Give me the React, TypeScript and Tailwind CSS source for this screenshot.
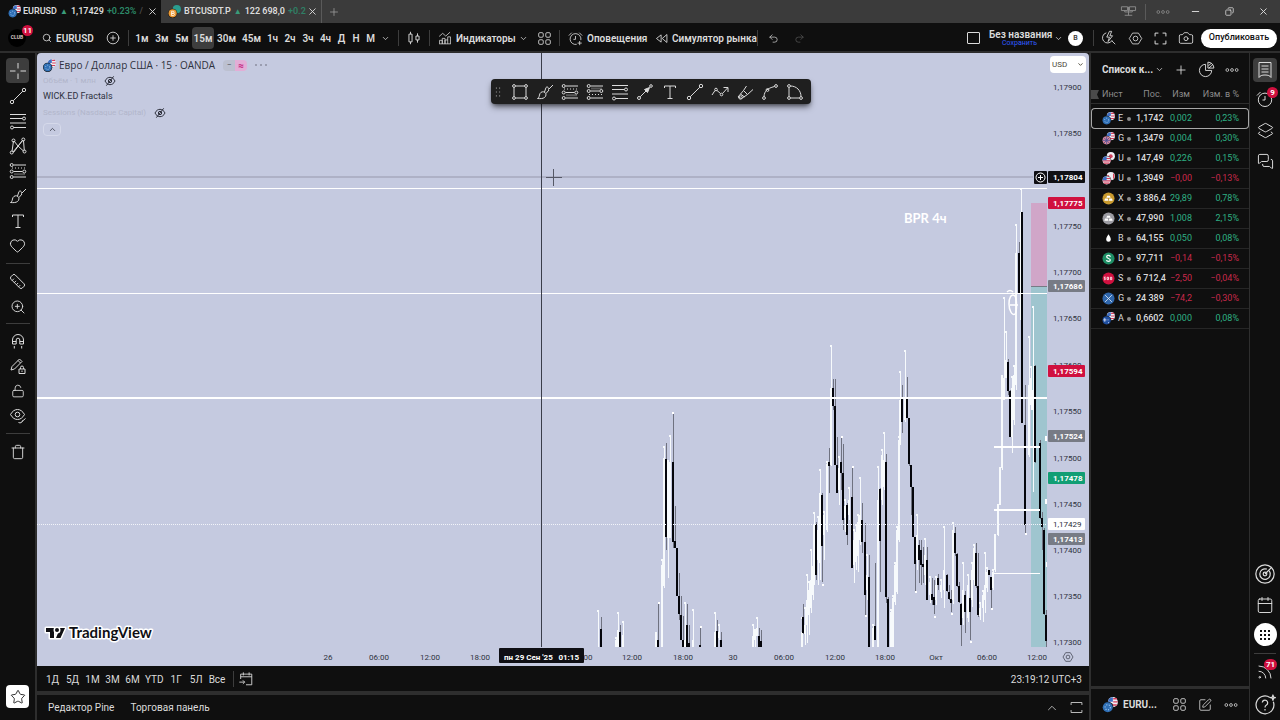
import type { ReactNode } from "react";
import {
  ChevronDown,
  ChevronUp,
  Search,
  CirclePlus,
  Heart,
  Ruler,
  ZoomIn,
  LockOpen,
  Trash,
  Star,
  Plus,
  X,
  Minus,
  Undo2,
  Redo2,
  Camera,
  Layers2,
  MessagesSquare,
  Calendar,
  SquarePen,
  Copy,
  Rss,
} from "lucide-react";

/* ---------- icons ---------- */

function Glyph({ children, size = 18, className = "" }: { children: ReactNode; size?: number; className?: string }) {
  return (
    <svg
      width={size}
      height={size}
      viewBox="0 0 18 18"
      fill="none"
      stroke="currentColor"
      strokeWidth={1}
      strokeLinejoin="round"
      className={`shrink-0 ${className}`}
      aria-hidden="true"
    >
      {children}
    </svg>
  );
}

const CrossIcon = () => (
  <Glyph>
    <path d="M9 1v5.5M9 11.500v5.500M1 9h5.500M11.500 9h5.500" />
  </Glyph>
);

const TrendIcon = () => (
  <Glyph>
    <circle cx="3" cy="15" r="1.700" />
    <circle cx="15" cy="3" r="1.700" />
    <path d="M4.200 13.800 13.800 4.200" />
  </Glyph>
);

const LevelsIcon = () => (
  <Glyph>
    <path d="M1 2.500h16M1 6.500h12.500M1 11h16" />
    <circle cx="15" cy="6.500" r="1.500" />
    <path d="M4.500 15.500H17" />
    <circle cx="3" cy="15.500" r="1.500" />
  </Glyph>
);

const PatternIcon = () => (
  <Glyph>
    <path d="M3 14.500 4.500 4M5 4l4 5 5-6M14.500 3.500l.800 10M4 15l5-6 5.500 5M4.500 15.500 13 4" />
    <circle cx="2.700" cy="15.500" r="1.500" />
    <circle cx="4.500" cy="3.500" r="1.500" />
    <circle cx="14.300" cy="2.500" r="1.500" />
    <circle cx="15.500" cy="14.500" r="1.500" />
  </Glyph>
);

const PositionIcon = () => (
  <Glyph>
    <circle cx="2.700" cy="3" r="1.500" />
    <path d="M4.500 3H17" />
    <path d="M3 6h14" strokeDasharray="1 2" />
    <circle cx="2.700" cy="9.500" r="1.500" />
    <path d="M4.500 9.500h9" />
    <circle cx="15.300" cy="9.500" r="1.500" />
    <circle cx="2.700" cy="15" r="1.500" />
    <path d="M4.500 15H17" />
    <path d="M5 12.200h11" strokeWidth="2" opacity="0.300" />
  </Glyph>
);

const ShortPositionIcon = () => (
  <Glyph>
    <circle cx="2.700" cy="3" r="1.500" />
    <path d="M4.500 3H17" />
    <path d="M5 5.500h11" strokeWidth="2" opacity="0.300" />
    <circle cx="2.700" cy="8" r="1.500" />
    <path d="M4.500 8h9" />
    <circle cx="15.300" cy="8" r="1.500" />
    <path d="M3 11.500h14" strokeDasharray="1 2" />
    <circle cx="2.700" cy="15" r="1.500" />
    <path d="M4.500 15H17" />
  </Glyph>
);

const BrushIcon = () => (
  <Glyph>
    <path d="M1.500 15.500c2-.500 1.500-3 2.500-5 1-1.800 3.300-2.300 5-1 1.500 1.300 1.300 3.500-.500 5-1.500 1.200-4.500 1.300-7 1Z" />
    <path d="m8.500 9 1.500-4.500c1.500-1.500 3 .500 2.500 2L17 2M10 10.500l3-3.500" />
  </Glyph>
);

const TextIcon = () => (
  <Glyph>
    <path d="M3.500 5V3h11v2M9 3v12.500M6.500 15.500h5" />
  </Glyph>
);

const MagnetIcon = () => (
  <Glyph>
    <path d="M3.500 12V8a5.500 5.500 0 0 1 11 0v4h-3.700V8a1.800 1.800 0 0 0-3.600 0v4H3.500ZM3.500 9.500h3.700M10.800 9.500h3.700M5.300 14v2.500M12.700 14v2.500" />
  </Glyph>
);

const PencilLockIcon = () => (
  <Glyph>
    <path d="m2 13 1-3.500 7.500-7.500 2.500 2.500L5.500 12 2 13ZM9 3.500 11.500 6" />
    <path d="M10 12h6v4.500h-6zM11.500 12v-1.500a1.500 1.500 0 0 1 3 0V12M13 13.500v1.500" />
  </Glyph>
);

const EyeIcon = () => (
  <Glyph>
    <path d="M1.500 7.500C3.500 4 5.800 2.500 8.500 2.500s5 1.500 7 5c-2 3.500-4.300 5-7 5s-5-1.500-7-5Z" />
    <circle cx="8.500" cy="7.500" r="2.300" />
    <path d="M9.500 15.500c2 .800 3.500.300 4-2M13 14.500l3.500-3" />
  </Glyph>
);

const HiddenIcon = () => (
  <Glyph size={12} className="text-[#22252f]">
    <path d="M1.500 9C3.500 5 6 3.500 9 3.500S14.500 5 16.500 9c-2 4-4.500 5.500-7.500 5.500S3.500 13 1.500 9Z" strokeWidth="1.400" />
    <circle cx="9" cy="9" r="2.500" strokeWidth="1.400" />
    <path d="M3.500 16 14.500 2" strokeWidth="1.400" />
  </Glyph>
);

const CandlesIcon = () => (
  <Glyph size={14}>
    <path d="M2.500 4h4v10h-4zM4.500 1V4M4.500 14v3M11.500 6.500h4v5h-4zM13.500 3v3.500M13.500 11.500V15" strokeWidth="1.200" />
  </Glyph>
);

const IndicatorsIcon = () => (
  <Glyph size={14}>
    <path d="M2 16.500V12h3.500v4.500M5.500 16.500V9.500H9v7M9 16.500v-5h3.500M12.500 16.500v-9H16v9M1.500 16.500h15M1.500 7 6 3l4 3.500L15.500 1.500" />
  </Glyph>
);

const SquaresIcon = ({ size = 15 }: { size?: number }) => (
  <Glyph size={size}>
    <rect x="2" y="2" width="5.500" height="5.500" rx="1.500" />
    <rect x="10.500" y="2" width="5.500" height="5.500" rx="1.500" />
    <rect x="2" y="10.500" width="5.500" height="5.500" rx="1.500" />
    <rect x="10.500" y="10.500" width="5.500" height="5.500" rx="1.500" />
  </Glyph>
);

const AlarmIcon = ({ size = 15, plus = false }: { size?: number; plus?: boolean }) => (
  <Glyph size={size}>
    <path d={plus ? "M15.400 11a6.500 6.500 0 1 0-5 5M14 12v5M11.500 14.500h5" : "M9 16.500a6.700 6.700 0 1 0 0-13.400 6.700 6.700 0 0 0 0 13.400Z"} />
    <path d="M9 6v4H6.500M1 5.500 4.500 2M17 5.500 13.500 2" />
  </Glyph>
);

const RewindIcon = () => (
  <Glyph size={13}>
    <path d="M8.500 4v10L2 9l6.500-5ZM16.500 3.500v11L10 9l6.500-5.500Z" strokeWidth="1.200" />
  </Glyph>
);

const BoltSearchIcon = () => (
  <Glyph size={16}>
    <path d="M6 3.200a5.800 5.800 0 1 0 6.500 8.500M12 12l4 4M9.500 1.500 6.500 8h3l-1.500 5 5-6.500h-3l2-5h-2.500Z" />
  </Glyph>
);

const HexIcon = ({ size = 16 }: { size?: number }) => (
  <Glyph size={size}>
    <path d="M5.500 2.500h7L16.500 9l-4 6.500h-7L1.500 9l4-6.500Z" />
    <circle cx="9" cy="9" r="2.800" />
  </Glyph>
);

const FullscreenIcon = () => (
  <Glyph size={15}>
    <path d="M2.500 6.500v-4h4M11.500 2.500h4v4M15.500 11.500v4h-4M6.500 15.500h-4v-4" strokeWidth="1.200" />
  </Glyph>
);

const DotsIcon = ({ size = 16 }: { size?: number }) => (
  <Glyph size={size}>
    <circle cx="3" cy="9" r="1.800" />
    <circle cx="9" cy="9" r="1.800" />
    <circle cx="15" cy="9" r="1.800" />
  </Glyph>
);

const PieIcon = () => (
  <Glyph size={17}>
    <path d="M8 3.500a6.500 6.500 0 1 0 6.500 6.500H8V3.500Z" />
    <path d="M10.500 1.200v6.300h6.300a6.300 6.300 0 0 0-6.300-6.300ZM11 5l3-2.500M11.500 7.500l4.500-4" />
  </Glyph>
);

const WatchlistIcon = () => (
  <Glyph>
    <path d="M3 1.500h12v15c-1-1.800-3-2.500-6-2.500s-5 .700-6 2.500v-15ZM5.500 5h7M5.500 8h7M5.500 11h7" />
  </Glyph>
);

const RadarIcon = () => (
  <Glyph size={22}>
    <circle cx="9" cy="9" r="7.500" />
    <path d="M12.500 6.500a4.300 4.300 0 1 1-2-1.500M9 9l5-5" />
    <circle cx="9" cy="9" r="1.500" />
  </Glyph>
);

const HelpIcon = () => (
  <Glyph size={22}>
    <path d="M13 2.800a7.300 7.300 0 1 0 2.800 3.500M15.500.800l.500 1.700 1.500.500-1.500.500-.500 1.700-.500-1.700-1.500-.500 1.500-.500.500-1.700Z" />
    <path d="M6.800 7a2.200 2.200 0 1 1 3.400 2c-.900.500-1.200.900-1.200 2M9 12.200v1.300" />
  </Glyph>
);

const DateGoIcon = () => (
  <Glyph size={16}>
    <path d="M3 9V3.500h12.500v12H9M3 6.500h12.500M6 1.500v3.500M12.500 1.500v3.500M1.500 12.500h6M5.500 10.500l2 2-2 2" />
  </Glyph>
);

const RectIcon = () => (
  <Glyph>
    <path d="M4.500 3h9M4.500 15h9M3 4.500v9M15 4.500v9" />
    <circle cx="3" cy="3" r="1.400" />
    <circle cx="15" cy="3" r="1.400" />
    <circle cx="3" cy="15" r="1.400" />
    <circle cx="15" cy="15" r="1.400" />
  </Glyph>
);

const ArrowIcon = () => (
  <Glyph>
    <circle cx="3" cy="15" r="1.500" />
    <circle cx="15" cy="3" r="1.300" />
    <path d="M4.200 13.800 13 5" />
    <path d="m13.500 4.500-5 2 3 3 2-5Z" fill="currentColor" />
  </Glyph>
);

const ZigzagIcon = () => (
  <Glyph>
    <path d="M1 12l3-4.500M6 7.500l3.500 3M11.500 10.500 16.500 5M12.500 4.500H17V9" />
    <circle cx="5" cy="6.500" r="1.300" />
    <circle cx="10.500" cy="11.500" r="1.300" />
  </Glyph>
);

const HighlighterIcon = () => (
  <Glyph>
    <path d="m2 14 5.500-6.500 4 4L5.500 15.500 2 14ZM7.500 7.500l3-4.500M11.500 11.500l5.500-5M4.500 11l4 3" />
    <circle cx="4.500" cy="14.500" r="1.700" />
  </Glyph>
);

const CurveIcon = () => (
  <Glyph>
    <path d="M3 13.500C3.500 8 6 5.500 13.500 3.500" />
    <circle cx="3" cy="15" r="1.400" />
    <circle cx="6.500" cy="7" r="1.400" />
    <circle cx="15" cy="3" r="1.400" />
  </Glyph>
);

const SectorIcon = () => (
  <Glyph>
    <path d="M3 4.500v9M4.500 3c6 0 10.500 4.500 10.500 10.500M4.500 15h9" />
    <circle cx="3" cy="3" r="1.400" />
    <circle cx="3" cy="15" r="1.400" />
    <circle cx="15" cy="15" r="1.400" />
  </Glyph>
);

function PairIcon({ front, back, size = 13 }: { front: "eu" | "gb" | "us" | "au" | "btc"; back: "us" | "jp" | "ca" | "usdt"; size?: number }) {
  const fill = { eu: "#2f6fb5", gb: "#d9879b", us: "#e8e4ee", au: "#1f4fa0", btc: "#eb9a35" }[front];
  return (
    <svg width={size} height={size} viewBox="0 0 14 14" className="shrink-0" aria-hidden="true">
      <circle cx="9.500" cy="4.500" r="4.400" fill={back === "usdt" ? "#2a9d8f" : "#f0eef4"} />
      {back === "us" && <path d="M9.500.200a4.400 4.400 0 0 0-4.300 4h4.300Z" fill="#3f6fc4" />}
      {back === "us" && <path d="M9.800 1.500h3.200M9.800 4.300h4M8 7h5" stroke="#d3405c" strokeWidth="1.200" />}
      {back === "jp" && <circle cx="9.500" cy="4.500" r="2" fill="#d3405c" />}
      {back === "ca" && <path d="M5.500 3.500h2v3h-2zM12 1.200v6.500a4.400 4.400 0 0 0 0-6.500Z" fill="#d92b45" />}
      <circle cx="5" cy="9" r="5" fill="#0f0f0f" />
      <circle cx="5" cy="9" r="4.400" fill={fill} />
      {front === "eu" && <circle cx="5" cy="9" r="2.300" fill="none" stroke="#a9cdf0" strokeWidth="0.900" strokeDasharray="1 1.300" />}
      {front === "gb" && <path d="M5 4.800v8.400M.800 9h8.400M2 6l6 6M8 6l-6 6" stroke="#4a4f96" strokeWidth="0.900" />}
      {front === "us" && <path d="M1.500 7h7.500M1 9.500h8.400M2 12h6" stroke="#d3405c" strokeWidth="1.200" />}
      {front === "us" && <path d="M5 4.600A4.400 4.400 0 0 0 .700 9H5Z" fill="#3f6fc4" />}
      {front === "au" && <path d="M3 6.500v4M1.300 8.500h3.500M6.500 8v1M7 11v1" stroke="#e0e6f5" strokeWidth="0.900" />}
      {front === "btc" && <path d="M3.800 6.800h1.700a1 1 0 0 1 0 2.200H3.800Zm0 2.200h2a1 1 0 0 1 0 2.300h-2Z" fill="none" stroke="#fff" strokeWidth="0.800" />}
    </svg>
  );
}

function RoundIcon({ kind }: { kind: "gold" | "silver" | "oil" | "dxy" | "spx" | "xrp" }) {
  const fill = { gold: "#c99a2e", silver: "#9c9ca3", oil: "#0f0f0f", dxy: "#1f8f66", spx: "#d0103f", xrp: "#2f66ab" }[kind];
  return (
    <svg width="13" height="13" viewBox="0 0 14 14" className="shrink-0" aria-hidden="true">
      <circle cx="7" cy="7" r="6.500" fill={fill} />
      {(kind === "gold" || kind === "silver") && <path d="M5.500 4h3l.800 2.200H4.700zM3.200 7h3l.800 2.500H2.500zM7.800 7h3l.700 2.500H7.500z" fill="#fff" />}
      {kind === "oil" && <path d="M7 2.500c1.500 2.300 2.500 4 2.500 5.500a2.500 2.500 0 0 1-5 0c0-1.500 1-3.200 2.500-5.500Z" fill="#fff" />}
      {kind === "dxy" && <path d="M9 5.200c-.300-2-4-1.900-4 0 0 2 4 1.500 4 3.500 0 1.900-3.900 1.900-4.200 0" fill="none" stroke="#fff" strokeWidth="1.300" />}
      {kind === "spx" && <path d="M4 5.500H2.500v1.300h1v1.500h-1.200M5.500 5.700h1.500v2.500H5.500zM9 5.700h1.500v2.500H9z" fill="none" stroke="#fff" strokeWidth="0.900" />}
      {kind === "xrp" && <path d="M3.500 3.500C5 5 6.500 6.500 7 7c.500-.500 2-2 3.500-3.500M3.500 10.500C5 9 6.500 7.500 7 7c.500.500 2 2 3.500 3.500" fill="none" stroke="#fff" strokeWidth="0.900" />}
    </svg>
  );
}

/* ---------- chart data ---------- */

type Bar = [x: number, high: number, low: number, top: number, bottom: number];

const upBars: Bar[] = [
  [598, 611, 647, 647, 647], [616, 638, 647, 640, 647], [618, 613, 647, 630, 647], [623, 622, 647, 635, 647],
  [656, 633, 647, 633, 647], [662, 560, 647, 565, 647], [664, 447, 588, 458, 586], [668, 510, 578, 460, 538],
  [670, 436, 538, 462, 538], [685, 603, 647, 640, 647], [693, 610, 647, 640, 647], [715, 613, 647, 632, 647],
  [719, 625, 640, 632, 638], [753, 625, 647, 636, 647], [755, 630, 647, 630, 640], [757, 618, 636, 628, 636],
  [802, 618, 647, 632, 647], [805, 608, 645, 625, 634], [807, 575, 643, 600, 625], [809, 582, 635, 590, 615],
  [811, 550, 613, 580, 608], [813, 567, 600, 567, 595], [814, 513, 585, 525, 568], [818, 517, 585, 530, 560],
  [820, 470, 580, 493, 563], [824, 512, 560, 515, 535], [827, 462, 532, 464, 530], [831, 346, 466, 388, 465],
  [839, 457, 505, 468, 490], [845, 500, 532, 506, 518], [849, 488, 520, 500, 515], [854, 530, 583, 540, 565],
  [856, 525, 570, 532, 562], [858, 515, 572, 522, 556], [860, 478, 545, 515, 540], [867, 555, 600, 575, 590],
  [873, 625, 647, 628, 647], [878, 467, 647, 500, 647], [882, 450, 505, 455, 500], [884, 433, 490, 460, 487],
  [891, 610, 647, 612, 647], [893, 596, 647, 598, 647], [895, 563, 605, 565, 602], [897, 527, 594, 530, 592],
  [899, 437, 542, 440, 540], [900, 372, 445, 400, 440], [905, 351, 422, 398, 420], [917, 515, 570, 535, 560],
  [925, 539, 585, 555, 575], [930, 577, 603, 582, 595], [936, 577, 605, 585, 600], [941, 580, 598, 585, 592],
  [944, 527, 608, 570, 590], [953, 523, 604, 530, 600], [963, 563, 625, 590, 618], [968, 575, 622, 585, 618],
  [972, 563, 607, 570, 600], [974, 545, 585, 548, 580], [980, 603, 620, 608, 616], [983, 591, 622, 595, 608],
  [985, 553, 613, 585, 600], [987, 568, 592, 572, 588], [993, 570, 590, 572, 588], [995, 535, 572, 536, 570],
  [998, 505, 536, 505, 535], [1000, 468, 505, 468, 505], [1002, 376, 470, 377, 468], [1004, 298, 392, 378, 400],
  [1006, 332, 378, 360, 378], [1012, 377, 453, 388, 437], [1014, 366, 425, 375, 420], [1016, 225, 390, 253, 385],
  [1021, 189, 330, 212, 320], [1029, 337, 457, 385, 455], [1031, 367, 410, 378, 405], [1033, 307, 492, 390, 410],
];

const downBars: Bar[] = [
  [601, 617, 647, 629, 647], [620, 625, 647, 632, 647], [658, 603, 647, 640, 647], [666, 443, 550, 459, 537],
  [673, 413, 548, 462, 542], [675, 506, 548, 541, 548], [677, 548, 596, 548, 596], [679, 573, 620, 596, 614],
  [681, 596, 640, 615, 640], [683, 616, 647, 640, 647], [687, 604, 647, 625, 647], [689, 625, 647, 643, 647],
  [700, 628, 647, 645, 647], [717, 620, 647, 631, 647], [721, 632, 647, 640, 647], [759, 628, 647, 636, 647],
  [761, 630, 647, 641, 647], [803, 604, 634, 617, 633], [816, 522, 580, 524, 575], [822, 493, 582, 495, 546],
  [829, 448, 493, 462, 466], [833, 379, 410, 388, 406], [835, 379, 465, 406, 465], [837, 437, 493, 465, 493],
  [841, 438, 490, 462, 473], [843, 444, 530, 473, 520], [847, 503, 545, 505, 535], [852, 468, 568, 497, 568],
  [862, 503, 553, 520, 542], [865, 523, 615, 542, 595], [869, 555, 647, 577, 647], [875, 563, 640, 626, 640],
  [880, 488, 592, 489, 541], [886, 454, 603, 462, 597], [888, 597, 647, 599, 647], [902, 385, 433, 398, 422],
  [907, 377, 418, 398, 418], [909, 418, 466, 418, 464], [911, 465, 515, 465, 487], [913, 487, 537, 487, 537],
  [915, 537, 591, 537, 564], [919, 540, 583, 545, 560], [921, 540, 585, 550, 565], [923, 547, 583, 564, 567],
  [927, 547, 600, 560, 600], [932, 578, 605, 594, 600], [934, 580, 614, 597, 605], [938, 574, 590, 578, 585],
  [947, 574, 592, 575, 591], [949, 585, 600, 592, 599], [951, 590, 612, 599, 603], [955, 527, 556, 533, 553],
  [957, 553, 587, 554, 586], [959, 582, 603, 586, 602], [961, 603, 646, 604, 625], [965, 591, 633, 595, 612],
  [970, 580, 640, 598, 612], [976, 543, 588, 553, 586], [978, 553, 617, 586, 615], [989, 570, 575, 570, 575],
  [991, 577, 608, 577, 590], [1008, 359, 395, 362, 391], [1010, 390, 437, 391, 437], [1019, 242, 293, 253, 293],
  [1022, 212, 423, 212, 423], [1025, 385, 533, 425, 525], [1035, 365, 463, 366, 462], [1040, 440, 519, 443, 518],
  [1042, 512, 550, 518, 527], [1044, 528, 615, 530, 614], [1046, 610, 647, 615, 641],
];

const priceTicks = [
  ["1,17900", 87], ["1,17850", 133], ["1,17750", 226], ["1,17700", 272], ["1,17650", 318], ["1,17600", 365],
  ["1,17550", 411], ["1,17500", 458], ["1,17450", 504], ["1,17400", 550], ["1,17350", 596], ["1,17300", 642],
] as const;

const priceTags = [
  { label: "1,17804", y: 177, bg: "#0f0f14", fg: "#ffffff" },
  { label: "1,17775", y: 203, bg: "#d0103f", fg: "#ffffff" },
  { label: "1,17686", y: 286, bg: "#777b85", fg: "#ffffff" },
  { label: "1,17594", y: 371, bg: "#d0103f", fg: "#ffffff" },
  { label: "1,17524", y: 436, bg: "#777b85", fg: "#ffffff" },
  { label: "1,17478", y: 478, bg: "#119e74", fg: "#ffffff" },
  { label: "1,17413", y: 539, bg: "#777b85", fg: "#ffffff" },
  { label: "1,17429", y: 524, bg: "#ffffff", fg: "#2c2f3a" },
];

const timeTicks = [
  ["26", 328], ["06:00", 379], ["12:00", 430], ["18:00", 480], ["00", 588], ["12:00", 632], ["18:00", 683],
  ["30", 733], ["06:00", 784], ["12:00", 835], ["18:00", 885], ["Окт", 936], ["06:00", 987], ["12:00", 1037],
] as const;

function Chart() {
  return (
    <svg viewBox="37 53 1052 613" preserveAspectRatio="xMaxYMin slice" className="block h-full w-full" role="img" aria-label="EURUSD, 15">
      <rect x="37" y="53" width="1052" height="613" fill="#c5cae0" />
      <g shapeRendering="crispEdges">
        <rect x="1031" y="203" width="16" height="83" fill="#d0a6c8" />
        <rect x="1031" y="287" width="16" height="360" fill="#9fc5cf" />
        <rect x="1031" y="286" width="16" height="1" fill="#777b85" />
        <rect x="37" y="176" width="996" height="2" fill="#aeb1c6" />
        {upBars.map(([x, high, low, top, bottom], i) => (
          <g key={i} fill="#f7fafc">
            <rect x={x} y={high} width="1" height={low - high} />
            <rect x={x - 1} y={high - 1} width="2" height="2" />
            <rect x={x - 1} y={top} width="2" height={bottom - top} />
          </g>
        ))}
        {downBars.map(([x, high, low, top, bottom], i) => (
          <g key={i}>
            <rect x={x} y={high} width="1" height={low - high} fill="#6f7280" />
            <rect x={x - 1} y={top} width="2" height={bottom - top} fill="#05060c" />
          </g>
        ))}
        <g fill="#ffffff">
          {[
            [672, 412], [700, 626], [852, 466], [841, 436], [865, 615], [970, 641], [951, 613], [934, 616],
            [991, 608], [1025, 533], [822, 584], [915, 591], [658, 602],
          ].map(([x, y]) => (
            <rect key={x} x={x} y={y} width="2" height="2" />
          ))}
          <rect x="37" y="188" width="1010" height="1" />
          <rect x="37" y="293" width="1010" height="1" />
          <rect x="37" y="397" width="1010" height="2" />
          <rect x="994" y="446" width="46" height="2" />
          <rect x="994" y="509" width="46" height="2" />
          <rect x="994" y="573" width="46" height="1" />
          <rect x="1045" y="436" width="2" height="5" />
          <rect x="1045" y="499" width="2" height="5" />
          <rect x="1046" y="562" width="1" height="5" />
        </g>
        <path d="M37 524.500h1010" stroke="#f2f4fa" strokeDasharray="1 1" />
        <rect x="541" y="53" width="1" height="594" fill="#3a3d4a" />
        <path d="M546 177.500h16M553.500 169v17" stroke="#555866" />
      </g>
      <path d="M1007 292c2-2 4-2 6 0M1015 296c-4-3-6 2-6 8s3 12 6 10c2-2 2-15 0-18ZM1010 305h8" fill="none" stroke="#ffffff" strokeWidth="1.500" />
      <text x="904" y="223" fontFamily="Lato, sans-serif" fontSize="13" fontWeight="700" fill="#ffffff">BPR 4ч</text>

      <g fontSize="8" fill="#2f323e">
        {priceTicks.map(([label, y]) => (
          <text key={label} x="1053" y={y + 3}>{label}</text>
        ))}
        {timeTicks.map(([label, x]) => (
          <text key={x} x={x} y="660" textAnchor="middle">{label}</text>
        ))}
      </g>
      {priceTags.map((tag) => (
        <g key={tag.label}>
          <rect x="1048" y={tag.y - 6} width="37" height="12" rx="1" fill={tag.bg} />
          <text x="1053" y={tag.y + 3} fontSize="8" fontWeight={tag.fg === "#ffffff" ? 700 : 400} fill={tag.fg}>{tag.label}</text>
        </g>
      ))}
      <rect x="1034" y="171" width="13" height="13" rx="1" fill="#0f0f14" />
      <circle cx="1040.500" cy="177.500" r="4.500" fill="none" stroke="#fff" />
      <path d="M1038 177.500h5M1040.500 175v5" stroke="#fff" />

      <rect x="499" y="648" width="85" height="15" rx="1" fill="#0f0f14" />
      <text x="504" y="660" fontSize="8" fontWeight="700" fill="#fff">пн 29 Сен '25</text>
      <text x="579" y="660" fontSize="8" fontWeight="700" fill="#fff" textAnchor="end">01:15</text>

      <g fill="#0f0f14" stroke="#ffffff" strokeWidth="3" strokeLinejoin="round" paintOrder="stroke">
        <path d="M46 628h8v10h-4v-6h-4ZM60 628h5l-4.500 10H56Z" />
        <circle cx="57" cy="630" r="2" />
        <text x="69" y="638" fontFamily="Lato, sans-serif" fontSize="15" fontWeight="700">TradingView</text>
      </g>
    </svg>
  );
}

/* ---------- window tabs ---------- */

function IconButton({ label, children, className = "" }: { label: string; children: ReactNode; className?: string }) {
  return (
    <button type="button" aria-label={label} className={`flex shrink-0 items-center justify-center ${className}`}>
      {children}
    </button>
  );
}

function WindowBar() {
  return (
    <header className="flex h-[23px] shrink-0 items-center bg-[#3b3b3b] text-[9px] font-semibold whitespace-nowrap">
      <div className="flex h-full w-[161px] shrink-0 items-center bg-[#0f0f0f] pl-2">
        <PairIcon front="eu" back="us" />
        <span className="ml-0.5">EURUSD</span>
        <span className="ml-[3px] text-[8px] text-[#3a9c7a]">▲</span>
        <span className="ml-[3px]">1,17429</span>
        <span className="ml-[3px] text-[#2c8a69]">+0.23%</span>
        <span className="ml-[3px] text-[#4a4a4a]">/</span>
        <IconButton label="Закрыть вкладку EURUSD" className="ml-auto mr-0.5 w-3.5">
          <X size={11} strokeWidth={2} />
        </IconButton>
      </div>
      <div className="flex h-full w-[161px] shrink-0 items-center border-r border-[#5a5a5a] pl-[7px]">
        <PairIcon front="btc" back="usdt" />
        <span className="ml-[3px]">BTCUSDT.P</span>
        <span className="ml-[3px] text-[8px] text-[#3a9c7a]">▲</span>
        <span className="ml-[3px]">122 698,0</span>
        <span className="ml-[3px] text-[#2f7f65]">+0.2</span>
        <IconButton label="Закрыть вкладку BTCUSDT.P" className="ml-auto mr-0.5 w-3.5">
          <X size={11} strokeWidth={2} />
        </IconButton>
      </div>
      <IconButton label="Новая вкладка" className="ml-1 w-4 text-[#a0a0a0]">
        <Plus size={12} strokeWidth={1.500} />
      </IconButton>
      <div className="ml-auto flex h-full items-center text-[#8c8c8c]">
        <IconButton label="Связать вкладки" className="w-[34px]">
          <Glyph size={17}>
            <path d="M1.500 4h6.500v4H1.500zM10 4h6.500v4H10zM9 4v9M5 13h8M5 8v1.500h8V8" />
          </Glyph>
        </IconButton>
        <span className="h-4 w-px bg-[#5a5a5a]" />
        <IconButton label="Меню" className="w-[33px]"><DotsIcon size={14} /></IconButton>
        <IconButton label="Свернуть" className="w-[33px] text-[#e0e0e0]"><Minus size={11} /></IconButton>
        <IconButton label="Развернуть" className="w-[34px] text-[#e0e0e0]"><Copy size={9} className="-scale-x-100" /></IconButton>
        <IconButton label="Закрыть окно" className="w-[34px] text-[#e0e0e0]"><X size={11} /></IconButton>
      </div>
    </header>
  );
}

/* ---------- top toolbar ---------- */

const intervals = [
  ["1м", "w-5"], ["3м", "w-5"], ["5м", "w-5"], ["15м", "w-[22px] rounded bg-[#3d3d3d]"], ["30м", "w-[25px]"], ["45м", "w-[25px]"],
  ["1ч", "w-[17px]"], ["2ч", "w-[18px]"], ["3ч", "w-[18px]"], ["4ч", "w-[17px]"], ["Д", "w-[15px]"], ["Н", "w-[14px]"], ["М", "w-[15px]"],
] as const;

const Divider = () => <span className="h-4 w-px shrink-0 bg-[#3d3d3d]" />;

function TopToolbar() {
  return (
    <div className="flex h-[30px] shrink-0 items-center border-b-2 border-[#2e2e2e] pt-0.5 text-[10px] font-semibold whitespace-nowrap">
      <button type="button" aria-label="Профиль" className="relative ml-2 flex h-[18px] w-[18px] shrink-0 items-center justify-center rounded-full bg-black text-[5px] text-[#e0d8d8]">
        CLUB
        <span className="absolute -top-1 left-[14px] flex h-[11px] w-[11px] items-center justify-center rounded-full bg-[#d0103f] text-[8px] text-white">11</span>
      </button>
      <button type="button" className="ml-4 flex w-[57px] shrink-0 items-center gap-1">
        <Search size={10} strokeWidth={2} />EURUSD
      </button>
      <IconButton label="Сравнить" className="w-[28px]"><CirclePlus size={14} strokeWidth={1.500} /></IconButton>
      <span className="w-px" />
      <Divider />
      <div className="ml-[3px] flex h-[22px] items-center">
        {intervals.map(([label, cls]) => (
          <button key={label} type="button" className={`h-full shrink-0 text-center ${cls}`}>{label}</button>
        ))}
        <IconButton label="Интервалы" className="w-[14px]"><ChevronDown size={9} /></IconButton>
      </div>
      <span className="w-1.5" />
      <Divider />
      <IconButton label="Свечи" className="w-[30px]"><CandlesIcon /></IconButton>
      <Divider />
      <button type="button" className="ml-2 flex w-[73px] shrink-0 items-center gap-1"><IndicatorsIcon />Индикаторы</button>
      <IconButton label="Избранные индикаторы" className="ml-1 w-4"><ChevronDown size={9} /></IconButton>
      <IconButton label="Шаблоны" className="ml-1 w-[18px]"><SquaresIcon size={15} /></IconButton>
      <span className="w-1.5" />
      <Divider />
      <button type="button" className="ml-2 flex w-[79px] shrink-0 items-center gap-1"><AlarmIcon plus />Оповещения</button>
      <button type="button" className="ml-2 flex w-[98px] shrink-0 items-center gap-1"><RewindIcon />Симулятор рынка</button>
      <span className="w-1" />
      <Divider />
      <IconButton label="Отменить" className="w-[31px]"><Undo2 size={11} strokeWidth={1.500} /></IconButton>
      <IconButton label="Повторить" className="w-5 text-[#5a5a5a]"><Redo2 size={11} strokeWidth={1.500} /></IconButton>

      <div className="ml-auto flex h-full items-center">
        <IconButton label="Макет" className="w-4"><span className="h-[12px] w-[13px] rounded-[1px] border border-current" /></IconButton>
        <button type="button" className="ml-2 w-[61px] text-center leading-[9px]">
          Без названия
          <span className="block text-[7px] leading-[8px] font-normal text-[#2f5bff]">Сохранить</span>
        </button>
        <IconButton label="Макеты" className="w-4"><ChevronDown size={9} /></IconButton>
        <button type="button" aria-label="Брокер" className="ml-0.5 flex h-[15px] w-[15px] items-center justify-center rounded-full bg-white text-[7px] text-[#333]">B</button>
        <span className="w-2.5" />
        <Divider />
        <IconButton label="Быстрый поиск" className="ml-0.5 w-[26px]"><BoltSearchIcon /></IconButton>
        <IconButton label="Настройки" className="w-[26px]"><HexIcon size={15} /></IconButton>
        <IconButton label="Полный экран" className="w-[25px]"><FullscreenIcon /></IconButton>
        <IconButton label="Снимок" className="w-[25px]"><Camera size={16} strokeWidth={1.300} /></IconButton>
        <button type="button" className="mx-[3px] h-[19px] w-[76px] rounded-full bg-white text-[9px] font-medium text-[#0f0f0f]">Опубликовать</button>
      </div>
    </div>
  );
}

/* ---------- left rail ---------- */

const railGroups: [string, ReactNode][][] = [
  [
    ["Перекрестие", <CrossIcon />], ["Линия тренда", <TrendIcon />], ["Фибоначчи", <LevelsIcon />], ["Паттерны", <PatternIcon />],
    ["Прогнозирование", <PositionIcon />], ["Кисть", <BrushIcon />], ["Текст", <TextIcon />], ["Иконки", <Heart size={17} strokeWidth={1.400} />],
  ],
  [["Линейка", <Ruler size={17} strokeWidth={1.400} className="-scale-100" />], ["Увеличить", <ZoomIn size={16} strokeWidth={1.400} />]],
  [["Магнит", <MagnetIcon />], ["Режим рисования", <PencilLockIcon />], ["Заблокировать", <LockOpen size={14} strokeWidth={1.500} />], ["Скрыть", <EyeIcon />]],
  [["Удалить", <Trash size={16} strokeWidth={1.400} />]],
];

function LeftRail() {
  return (
    <aside className="flex w-[37px] shrink-0 flex-col items-center border-r-2 border-[#2e2e2e] pt-[5px]">
      {railGroups.map((group, g) => (
        <div key={g} className="flex flex-col items-center">
          {g > 0 && <span className={`h-px w-6 bg-[#3d3d3d] ${g === 2 ? "my-1" : "my-[5px]"}`} />}
          {group.map(([label, icon]) => (
            <IconButton key={label} label={label} className={`h-[25px] w-[23px] rounded ${label === "Перекрестие" ? "bg-[#3d3d3d]" : ""}`}>
              {icon}
            </IconButton>
          ))}
        </div>
      ))}
      <IconButton label="Избранное" className="mt-auto mb-3 h-[23px] w-[23px] rounded bg-white text-[#222]">
        <Star size={16} strokeWidth={1.400} />
      </IconButton>
    </aside>
  );
}

/* ---------- chart pane ---------- */

const drawTools: [string, ReactNode][] = [
  ["Прямоугольник", <RectIcon />], ["Кисть", <BrushIcon />], ["Длинная позиция", <PositionIcon />], ["Короткая позиция", <ShortPositionIcon />],
  ["Коррекция", <LevelsIcon />], ["Стрелка", <ArrowIcon />], ["Текст", <TextIcon />], ["Линия", <TrendIcon />],
  ["Путь", <ZigzagIcon />], ["Маркер", <HighlighterIcon />], ["Кривая", <CurveIcon />], ["Сектор", <SectorIcon />],
];

function ChartPane() {
  return (
    <section className="relative min-h-0 flex-1 overflow-hidden rounded-t">
      <Chart />
      <div className="absolute top-1 left-1.5 flex flex-col items-start text-[9px] whitespace-nowrap text-[#2f323e]">
        <div className="flex h-4 items-center">
          <PairIcon front="eu" back="us" />
          <span className="ml-[3px] font-['Open_Sans'] text-[10px]">Евро / Доллар США · 15 · OANDA</span>
          <span className="ml-2 flex h-[11px] w-3 items-center justify-center rounded-l bg-[#bcc0d0] text-[8px] font-bold text-[#70737f]">−</span>
          <span className="flex h-[11px] w-3 items-center justify-center rounded-r bg-[#e3add6] text-[10px] font-bold text-[#c2187a]">≈</span>
          <span className="ml-2 flex gap-[3px]">
            <span className="h-0.5 w-0.5 rounded-full bg-[#8b8ea0]" />
            <span className="h-0.5 w-0.5 rounded-full bg-[#8b8ea0]" />
            <span className="h-0.5 w-0.5 rounded-full bg-[#8b8ea0]" />
          </span>
        </div>
        <div className="flex h-4 items-center gap-2 text-[8px] text-[#b2b6cb]">
          Объём · 1 млн <HiddenIcon />
        </div>
        <div className="flex h-4 items-center">WICK.ED Fractals</div>
        <div className="flex h-4 items-center gap-2 text-[8px] text-[#b2b6cb]">
          Sessions (Nasdaque Capital) <HiddenIcon />
        </div>
        <IconButton label="Свернуть легенду" className="mt-0.5 h-[13px] w-[18px] rounded-sm border border-[#d5d9ea]">
          <ChevronUp size={9} />
        </IconButton>
      </div>

      <div className="absolute top-[26px] left-[454px] flex h-[25px] items-center rounded bg-[#1f1f1f] pr-1 text-[#dbdbdb] shadow-md shadow-black/50">
        <Glyph size={14} className="text-[#6a6a6a]">
          <path d="M7 3v2M11 3v2M7 8v2M11 8v2M7 13v2M11 13v2" strokeWidth="1.500" />
        </Glyph>
        <div className="ml-0.5 flex">
          {drawTools.map(([label, icon]) => (
            <IconButton key={label} label={label} className="h-[25px] w-[25px]">{icon}</IconButton>
          ))}
        </div>
      </div>

      <label className="absolute top-[3px] right-[3px] flex h-[17px] w-9 items-center rounded-sm bg-white text-[8px] text-[#4a4636]">
        <select aria-label="Валюта" className="w-full appearance-none pl-0.5 outline-none">
          <option>USD</option>
        </select>
        <ChevronDown size={7} strokeWidth={3} className="pointer-events-none absolute right-0.5" />
      </label>
      <button type="button" aria-label="Настройки шкалы" className="absolute right-[15px] bottom-[3px] text-[#2f323e]">
        <HexIcon size={12} />
      </button>
    </section>
  );
}

const ranges = ["1Д", "5Д", "1М", "3М", "6М", "YTD", "1Г", "5Л", "Все"];

function BottomBars() {
  return (
    <>
      <div className="flex h-[25px] shrink-0 items-center px-[7px] pt-px text-[10px]">
        {ranges.map((r) => (
          <button key={r} type="button" className="mr-[3px] min-w-[17px] px-px text-center">{r}</button>
        ))}
        <span className="mr-0.5 ml-1 flex"><Divider /></span>
        <IconButton label="Перейти к дате" className="w-5"><DateGoIcon /></IconButton>
        <button type="button" className="ml-auto">23:19:12 UTC+3</button>
      </div>
      <div className="flex h-[29px] shrink-0 items-center border-t-4 border-[#2e2e2e] pr-px pl-[11px] text-[10px]">
        <button type="button">Редактор Pine</button>
        <button type="button" className="ml-4">Торговая панель</button>
        <IconButton label="Открыть панель" className="ml-auto w-6"><ChevronUp size={14} strokeWidth={1.300} /></IconButton>
        <IconButton label="Развернуть панель" className="w-6">
          <Glyph size={15}><path d="M2.500 6V3h13v3M2.500 12v3h13v-3" /></Glyph>
        </IconButton>
      </div>
    </>
  );
}

/* ---------- watchlist ---------- */

const quotes: { icon: ReactNode; sym: string; last: string; chg: string; pct: string }[] = [
  { icon: <PairIcon front="eu" back="us" />, sym: "E", last: "1,1742", chg: "0,002", pct: "0,23%" },
  { icon: <PairIcon front="gb" back="us" />, sym: "G", last: "1,3479", chg: "0,004", pct: "0,30%" },
  { icon: <PairIcon front="us" back="jp" />, sym: "U", last: "147,49", chg: "0,226", pct: "0,15%" },
  { icon: <PairIcon front="us" back="ca" />, sym: "U", last: "1,3949", chg: "−0,00", pct: "−0,13%" },
  { icon: <RoundIcon kind="gold" />, sym: "X", last: "3 886,4", chg: "29,89", pct: "0,78%" },
  { icon: <RoundIcon kind="silver" />, sym: "X", last: "47,990", chg: "1,008", pct: "2,15%" },
  { icon: <RoundIcon kind="oil" />, sym: "B", last: "64,155", chg: "0,050", pct: "0,08%" },
  { icon: <RoundIcon kind="dxy" />, sym: "D", last: "97,711", chg: "−0,14", pct: "−0,15%" },
  { icon: <RoundIcon kind="spx" />, sym: "S", last: "6 712,4", chg: "−2,50", pct: "−0,04%" },
  { icon: <RoundIcon kind="xrp" />, sym: "G", last: "24 389", chg: "−74,2", pct: "−0,30%" },
  { icon: <PairIcon front="au" back="us" />, sym: "A", last: "0,6602", chg: "0,000", pct: "0,08%" },
];

function Watchlist() {
  return (
    <section className="flex w-[160px] shrink-0 flex-col border-l-2 border-[#2e2e2e]">
      <div className="flex h-[33px] shrink-0 items-center pl-[11px] text-[10px]">
        <button type="button" className="flex items-center gap-1.5 font-bold whitespace-nowrap">
          <span className="w-[47px] text-left">Список к...</span>
          <ChevronDown size={9} />
        </button>
        <IconButton label="Добавить символ" className="ml-1 w-[25px]"><Plus size={14} strokeWidth={1.500} /></IconButton>
        <IconButton label="Вид" className="w-[26px]"><PieIcon /></IconButton>
        <IconButton label="Ещё" className="w-[25px]"><DotsIcon size={14} /></IconButton>
      </div>
      <table className="w-full table-fixed border-separate border-spacing-0 text-[9px]">
        <colgroup>
          <col className="w-[45px]" />
          <col className="w-[28px]" />
          <col className="w-[28px]" />
          <col />
        </colgroup>
        <thead className="text-[#8c8c8c]">
          <tr className="h-[18px]">
            <th className="border-b border-[#2e2e2e] p-0 text-left font-normal">
              <span className="flex items-center gap-[3px]">
                <svg width="8" height="9" viewBox="0 0 8 9" aria-hidden="true"><path d="M0 0h8L6 4.500 8 9H0z" fill="#4a4a4a" /></svg>
                Инст
              </span>
            </th>
            <th className="border-b border-[#2e2e2e] p-0 pr-0.5 text-right font-normal">Пос.</th>
            <th className="border-b border-[#2e2e2e] p-0 pr-0.5 text-right font-normal">Изм</th>
            <th className="border-b border-[#2e2e2e] p-0 pr-[10px] text-right font-normal whitespace-nowrap">Изм. в %</th>
          </tr>
        </thead>
        <tbody>
          <tr className="h-1" aria-hidden="true"><td colSpan={4} className="p-0" /></tr>
          {quotes.map((q, i) => {
            const tone = q.chg.startsWith("−") ? "text-[#c8294b]" : "text-[#2eb083]";
            const edge = i === 0 ? "border-y border-[#a8a8a8]" : "border-b border-[#262626]";
            return (
              <tr key={i} className={i === 0 ? "h-[21px]" : "h-5"}>
                <td className={`p-0 ${edge} ${i === 0 ? "rounded-l border-l pl-[10px]" : "pl-[11px]"}`}>
                  <span className="flex items-center">
                    {q.icon}
                    <span className="ml-[3px] w-[7px]">{q.sym}</span>
                    <span className="ml-0.5 h-1 w-1 rounded-full bg-[#8c8c8c]" />
                  </span>
                </td>
                <td className={`p-0 font-medium whitespace-nowrap ${edge}`}>{q.last}</td>
                <td className={`p-0 text-right whitespace-nowrap ${edge} ${tone}`}>{q.chg}</td>
                <td className={`p-0 text-right ${edge} ${tone} ${i === 0 ? "rounded-r border-r pr-[9px]" : "pr-[10px]"}`}>{q.pct}</td>
              </tr>
            );
          })}
        </tbody>
      </table>
      <div className="mt-auto flex h-[34px] shrink-0 items-center border-t-[3px] border-[#2e2e2e] pl-[11px] text-[10px]">
        <PairIcon front="eu" back="us" size={16} />
        <span className="ml-[5px] w-8 font-bold">EURU...</span>
        <IconButton label="Виджеты" className="ml-3 w-[25px]"><SquaresIcon size={15} /></IconButton>
        <IconButton label="Заметка" className="w-[26px]"><SquarePen size={14} strokeWidth={1.400} /></IconButton>
        <IconButton label="Ещё" className="w-[25px]"><DotsIcon size={14} /></IconButton>
      </div>
    </section>
  );
}

function RightRail() {
  return (
    <aside className="flex w-[31px] shrink-0 flex-col items-center border-l border-[#2e2e2e] pt-[5px]">
      <IconButton label="Котировки" className="h-6 w-6 rounded bg-[#3d3d3d]"><WatchlistIcon /></IconButton>
      <IconButton label="Оповещения" className="relative mt-[3px] h-7 w-6">
        <AlarmIcon size={18} />
        <span className="absolute top-0.5 left-[14px] flex h-[11px] w-[11px] items-center justify-center rounded-full bg-[#d0103f] text-[8px] font-bold text-white">9</span>
      </IconButton>
      <IconButton label="Объекты" className="mt-0.5 h-[30px] w-6"><Layers2 size={17} strokeWidth={1.400} /></IconButton>
      <IconButton label="Чаты" className="h-8 w-6"><MessagesSquare size={17} strokeWidth={1.400} /></IconButton>
      <div className="mt-auto flex flex-col items-center">
        <IconButton label="Скринеры" className="h-[31px] w-6"><RadarIcon /></IconButton>
        <IconButton label="Календари" className="h-[31px] w-6"><Calendar size={18} strokeWidth={1.300} /></IconButton>
        <IconButton label="Продукты" className="my-[3px] h-[23px] w-[23px] rounded-full bg-white text-[#0f0f0f]">
          <Glyph size={18}>
            <path d="M4 5h2M8 5h2M12 5h2M4 9h2M8 9h2M12 9h2M4 13h2M8 13h2M12 13h2" strokeWidth="2" />
          </Glyph>
        </IconButton>
        <span className="mt-1 h-px w-[22px] bg-[#3d3d3d]" />
        <IconButton label="Уведомления" className="relative h-9 w-6">
          <Rss size={18} strokeWidth={1.300} />
          <span className="absolute top-[5px] left-[11px] flex h-[11px] w-[13px] items-center justify-center rounded-full bg-[#d0103f] text-[8px] font-bold text-white">71</span>
        </IconButton>
        <IconButton label="Помощь" className="h-[30px] w-6"><HelpIcon /></IconButton>
      </div>
    </aside>
  );
}

export default function App() {
  return (
    <div className="flex h-screen w-full flex-col overflow-hidden bg-[#0f0f0f] font-['Roboto','Open_Sans',sans-serif] text-[#dbdbdb]">
      <WindowBar />
      <TopToolbar />
      <div className="flex min-h-0 flex-1">
        <LeftRail />
        <main className="flex min-w-0 flex-1 flex-col">
          <ChartPane />
          <BottomBars />
        </main>
        <Watchlist />
        <RightRail />
      </div>
    </div>
  );
}
